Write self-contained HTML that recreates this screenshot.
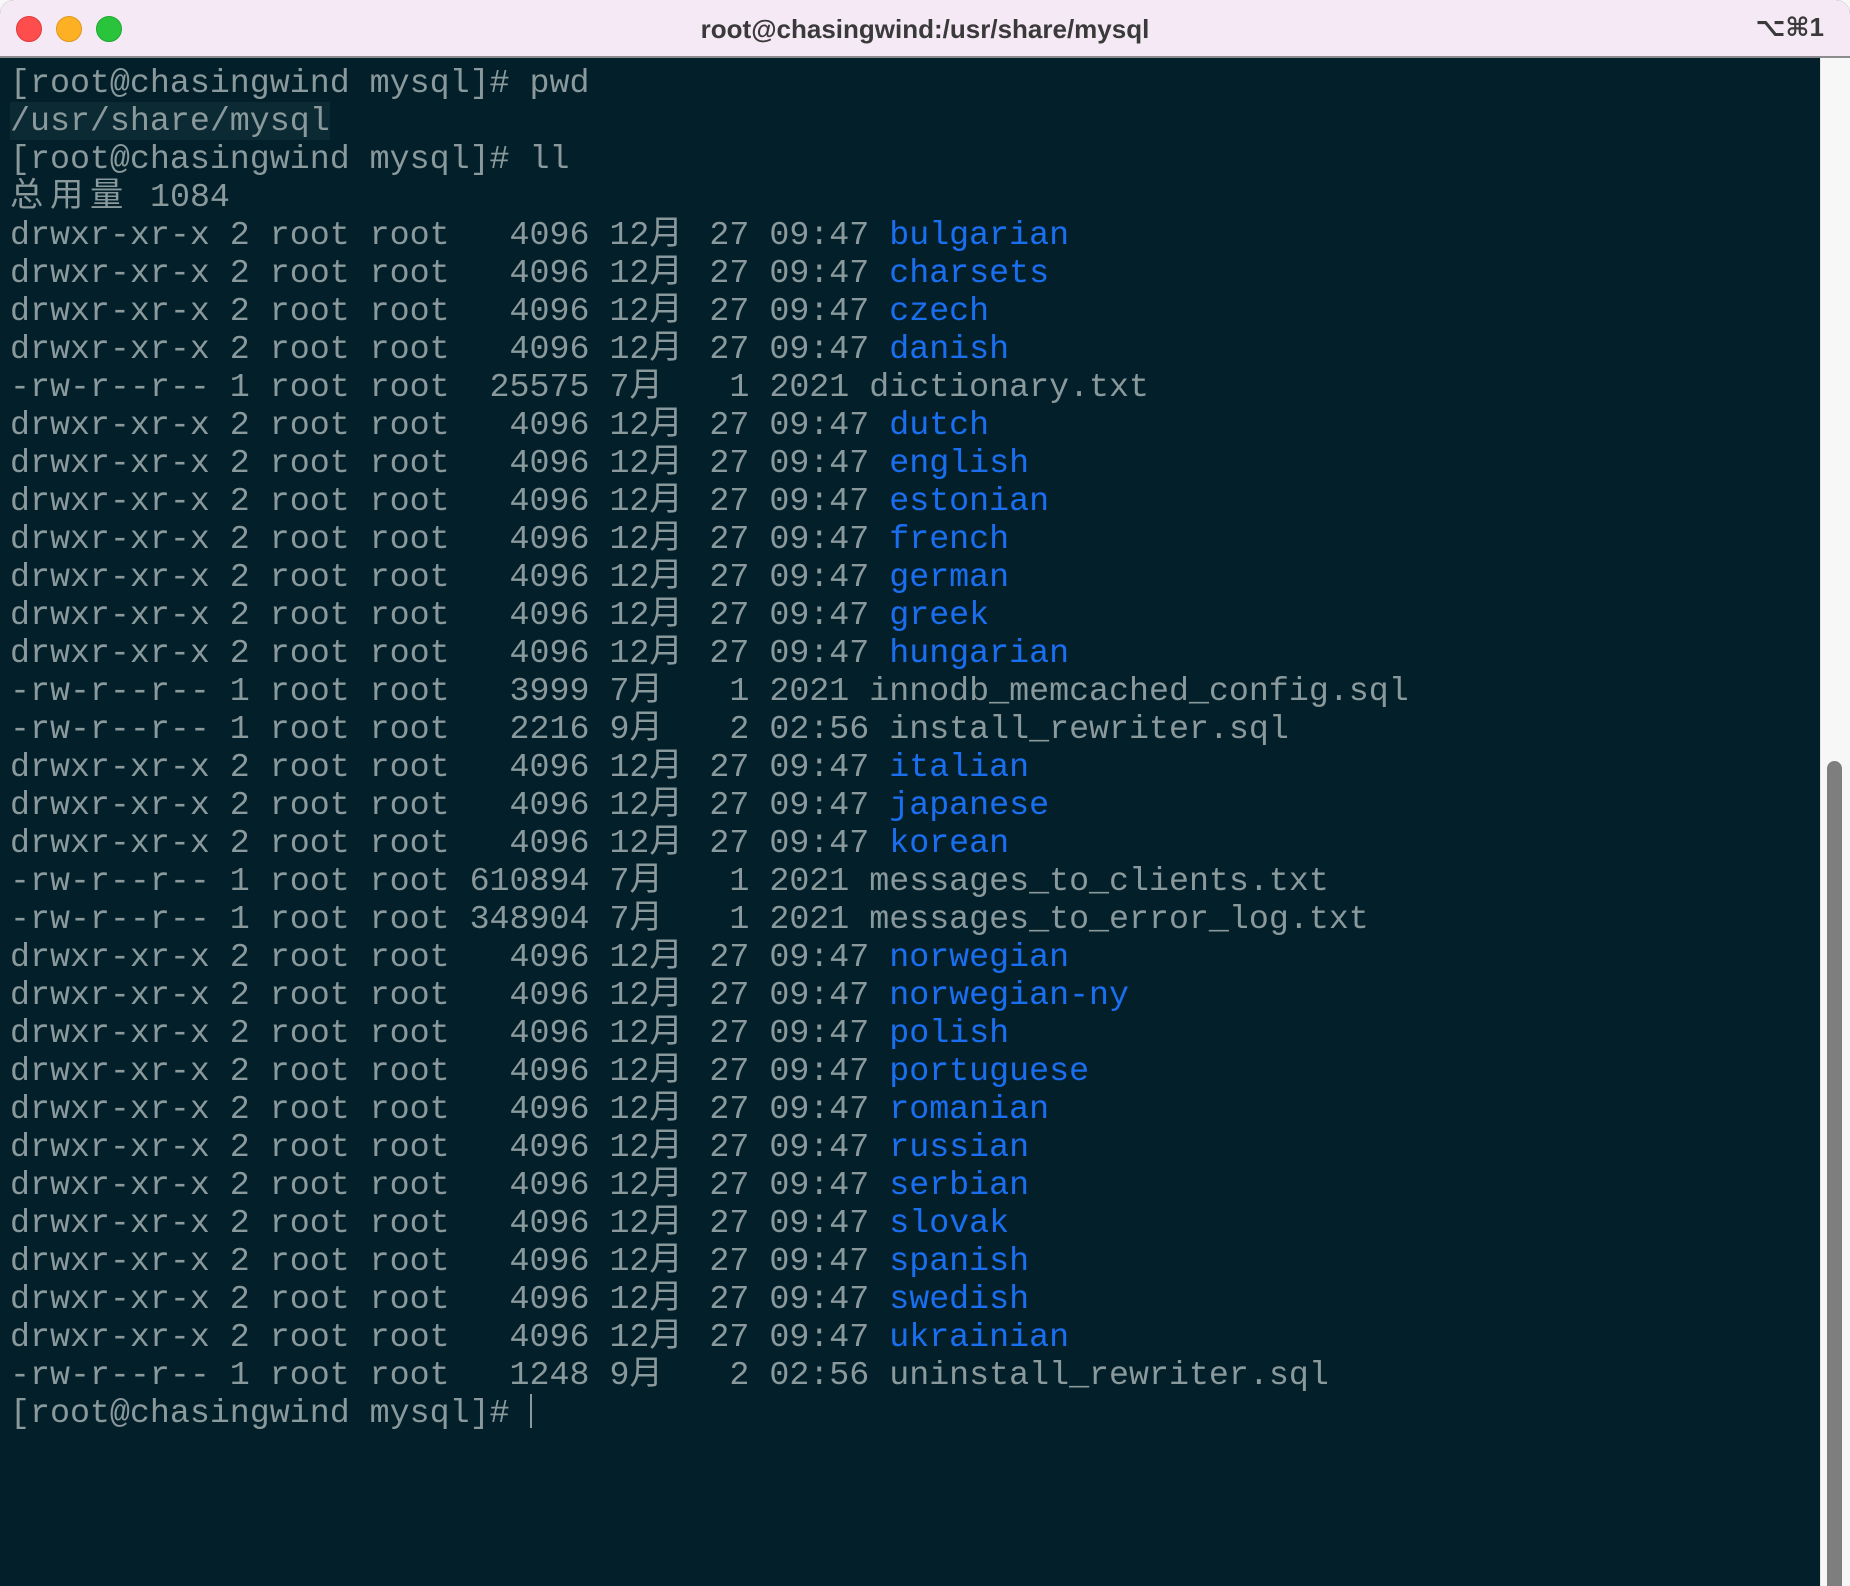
<!DOCTYPE html>
<html><head><meta charset="utf-8"><style>
html,body{margin:0;padding:0;width:1850px;height:1586px;overflow:hidden;background:#f7f7f7}
.win{position:absolute;left:0;top:0;width:1850px;height:1586px;background:#03202a;border-radius:14px 14px 0 0;overflow:hidden}
.title{position:absolute;left:0;top:0;width:1850px;height:56px;background:#f5e9f6;border-bottom:2px solid #8c8a8c}
.dot{position:absolute;top:16px;width:24px;height:24px;border-radius:50%}
.t{position:absolute;left:0;width:1850px;top:14px;height:30px;line-height:30px;text-align:center;font:bold 26px "Liberation Sans",sans-serif;color:#3a3a3a}
.k{position:absolute;right:26px;top:12px;height:30px;line-height:30px;font:bold 26px "Liberation Sans","DejaVu Sans",sans-serif;color:#3a3a3a}
.sb{position:absolute;left:1820px;top:58px;width:30px;height:1528px;background:#f7f7f7;border-left:1px solid #e4e4e4}
.thumb{position:absolute;left:1827px;top:761px;width:15px;height:840px;border-radius:8px;background:#7e7e7e}
pre{position:absolute;left:10px;top:64px;margin:0;font:33.3px/38px "Liberation Mono","Noto Sans CJK SC",monospace;color:#8a999c}
i{display:inline-block;width:40px;font-style:normal;text-align:left}
b{font-weight:normal;color:#1a6ff0}
.hl{background:#0b2a33}
.cur{display:inline-block;width:2px;height:34px;background:#8a999c;vertical-align:-6px}
</style></head><body><div class="win">
<div class="title"><div class="dot" style="left:16px;background:#fe4d4d;border:1px solid #e03a3a"></div><div class="dot" style="left:56px;background:#fdb024;border:1px solid #dd9a1a"></div><div class="dot" style="left:96px;background:#2ac43c;border:1px solid #1ea82e"></div><div class="t">root@chasingwind:/usr/share/mysql</div><div class="k">⌥⌘1</div></div>
<div class="sb"></div><div class="thumb"></div>
<pre>[root@chasingwind mysql]# pwd
<span class="hl">/usr/share/mysql</span>
[root@chasingwind mysql]# ll
<i>总</i><i>用</i><i>量</i> 1084
drwxr-xr-x 2 root root   4096 12<i>月</i> 27 09:47 <b>bulgarian</b>
drwxr-xr-x 2 root root   4096 12<i>月</i> 27 09:47 <b>charsets</b>
drwxr-xr-x 2 root root   4096 12<i>月</i> 27 09:47 <b>czech</b>
drwxr-xr-x 2 root root   4096 12<i>月</i> 27 09:47 <b>danish</b>
-rw-r--r-- 1 root root  25575 7<i>月</i>   1 2021 dictionary.txt
drwxr-xr-x 2 root root   4096 12<i>月</i> 27 09:47 <b>dutch</b>
drwxr-xr-x 2 root root   4096 12<i>月</i> 27 09:47 <b>english</b>
drwxr-xr-x 2 root root   4096 12<i>月</i> 27 09:47 <b>estonian</b>
drwxr-xr-x 2 root root   4096 12<i>月</i> 27 09:47 <b>french</b>
drwxr-xr-x 2 root root   4096 12<i>月</i> 27 09:47 <b>german</b>
drwxr-xr-x 2 root root   4096 12<i>月</i> 27 09:47 <b>greek</b>
drwxr-xr-x 2 root root   4096 12<i>月</i> 27 09:47 <b>hungarian</b>
-rw-r--r-- 1 root root   3999 7<i>月</i>   1 2021 innodb_memcached_config.sql
-rw-r--r-- 1 root root   2216 9<i>月</i>   2 02:56 install_rewriter.sql
drwxr-xr-x 2 root root   4096 12<i>月</i> 27 09:47 <b>italian</b>
drwxr-xr-x 2 root root   4096 12<i>月</i> 27 09:47 <b>japanese</b>
drwxr-xr-x 2 root root   4096 12<i>月</i> 27 09:47 <b>korean</b>
-rw-r--r-- 1 root root 610894 7<i>月</i>   1 2021 messages_to_clients.txt
-rw-r--r-- 1 root root 348904 7<i>月</i>   1 2021 messages_to_error_log.txt
drwxr-xr-x 2 root root   4096 12<i>月</i> 27 09:47 <b>norwegian</b>
drwxr-xr-x 2 root root   4096 12<i>月</i> 27 09:47 <b>norwegian-ny</b>
drwxr-xr-x 2 root root   4096 12<i>月</i> 27 09:47 <b>polish</b>
drwxr-xr-x 2 root root   4096 12<i>月</i> 27 09:47 <b>portuguese</b>
drwxr-xr-x 2 root root   4096 12<i>月</i> 27 09:47 <b>romanian</b>
drwxr-xr-x 2 root root   4096 12<i>月</i> 27 09:47 <b>russian</b>
drwxr-xr-x 2 root root   4096 12<i>月</i> 27 09:47 <b>serbian</b>
drwxr-xr-x 2 root root   4096 12<i>月</i> 27 09:47 <b>slovak</b>
drwxr-xr-x 2 root root   4096 12<i>月</i> 27 09:47 <b>spanish</b>
drwxr-xr-x 2 root root   4096 12<i>月</i> 27 09:47 <b>swedish</b>
drwxr-xr-x 2 root root   4096 12<i>月</i> 27 09:47 <b>ukrainian</b>
-rw-r--r-- 1 root root   1248 9<i>月</i>   2 02:56 uninstall_rewriter.sql
[root@chasingwind mysql]# <span class="cur"></span></pre>
</div></body></html>
